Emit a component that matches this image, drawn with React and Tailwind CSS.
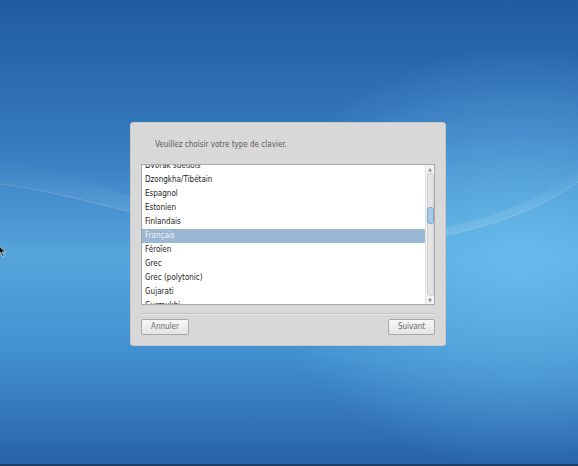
import React from 'react';

const rows = [
  'Dvorak suédois',
  'Dzongkha/Tibétain',
  'Espagnol',
  'Estonien',
  'Finlandais',
  'Français',
  'Féroïen',
  'Grec',
  'Grec (polytonic)',
  'Gujarati',
  'Gurmukhi',
];

const Backdrop = () => (
  <svg className="absolute inset-0" width="578" height="466" viewBox="0 0 578 466">
    <defs>
      <linearGradient id="bg" x1="0" y1="0" x2="0" y2="1">
        <stop offset="0%" stopColor="#1f5b9f" />
        <stop offset="30%" stopColor="#3679bd" />
        <stop offset="55%" stopColor="#55a5dc" />
        <stop offset="75%" stopColor="#4391d0" />
        <stop offset="100%" stopColor="#2762a8" />
      </linearGradient>
      <radialGradient id="glow" cx="0.9" cy="0.55" r="0.45">
        <stop offset="0%" stopColor="#6cc0ee" stopOpacity="0.8" />
        <stop offset="100%" stopColor="#6cc0ee" stopOpacity="0" />
      </radialGradient>
      <linearGradient id="band" x1="0" y1="0" x2="0" y2="1">
        <stop offset="0%" stopColor="#ffffff" stopOpacity="0" />
        <stop offset="100%" stopColor="#ffffff" stopOpacity="0.14" />
      </linearGradient>
    </defs>
    <rect width="578" height="466" fill="url(#bg)" />
    <rect width="578" height="466" fill="url(#glow)" />
    {/* swoosh */}
    <path d="M0 160 C 90 175, 200 230, 330 236 C 440 240, 530 210, 578 170 L578 182 C 520 222, 440 246, 330 244 C 200 240, 90 195, 0 184 Z" fill="url(#band)" />
    <path d="M0 184 C 90 195, 200 240, 330 244 C 440 246, 520 222, 578 182" fill="none" stroke="#ffffff" strokeOpacity="0.14" strokeWidth="1.2" />
    <rect y="464" width="578" height="2" fill="#1a3f66" />
  </svg>
);

const Scrollbar = () => (
  <div className="w-[9px] flex flex-col items-center border-l border-[#e2e2e2] bg-[#f3f3f3]">
    <span className="h-[8px] text-[5px] leading-[8px] text-[#8a8a8a]">▲</span>
    <div className="relative flex-1 w-[7px] rounded-[3px] border border-[#cfcfcf] bg-[#e4e4e4]">
      <div className="absolute left-[-1px] top-[33px] w-[7px] h-[17px] rounded-[3px] border border-[#7fa6cf] bg-[#a9c9ea]" />
    </div>
    <span className="h-[8px] text-[5px] leading-[8px] text-[#8a8a8a]">▼</span>
  </div>
);

export default function App() {
  return (
    <div className="relative w-[578px] h-[466px] overflow-hidden" style={{ fontFamily: '"DejaVu Sans Condensed", "DejaVu Sans", sans-serif' }}>
      <Backdrop />

      {/* pointer at left edge */}
      <svg className="absolute left-[-3px] top-[245px]" width="9" height="12" viewBox="0 0 9 12">
        <path d="M1 0 L1 10 L3.5 7.5 L5.5 11.5 L7 10.8 L5 7 L8.5 7 Z" fill="#111" stroke="#fff" strokeWidth="0.6" />
      </svg>

      <div className="relative pt-[122px] pl-[130px]">
        <div className="w-[316px] h-[224px] flex flex-col rounded-[3px] bg-[#d8d8d8] border border-[#c8c8c8] px-[10px]">
          <div className="h-[41px] pl-[14px] pt-[17px] text-[8px] leading-[10px] text-[#5a5a5a]">
            Veuillez choisir votre type de clavier.
          </div>

          <div className="h-[141px] flex border border-[#a9a9a9] bg-white overflow-hidden">
            <div className="flex-1 overflow-hidden">
              <div className="-mt-[6px]">
                {rows.map((r) => (
                  <div
                    key={r}
                    className={
                      r === 'Français'
                        ? 'h-[14px] pl-[3px] text-[8px] leading-[14px] bg-[#9ab7d4] text-[#eef4fa]'
                        : 'h-[14px] pl-[3px] text-[8px] leading-[14px] text-[#1c1c1c]'
                    }
                  >
                    {r}
                  </div>
                ))}
              </div>
            </div>
            <Scrollbar />
          </div>

          <div className="mt-[8px] border-t border-[#c2c2c2] shadow-[0_1px_0_#e8e8e8]" />

          <div className="mt-[5px] flex justify-between">
            <button className="w-[48px] h-[16px] rounded-[2px] border border-[#a8a8a8] bg-gradient-to-b from-[#f8f8f8] to-[#e4e4e4] text-[8px] text-[#6a6a6a]">
              Annuler
            </button>
            <button className="w-[47px] h-[16px] rounded-[2px] border border-[#a8a8a8] bg-gradient-to-b from-[#f8f8f8] to-[#e4e4e4] text-[8px] text-[#6a6a6a]">
              Suivant
            </button>
          </div>
        </div>
      </div>
    </div>
  );
}
